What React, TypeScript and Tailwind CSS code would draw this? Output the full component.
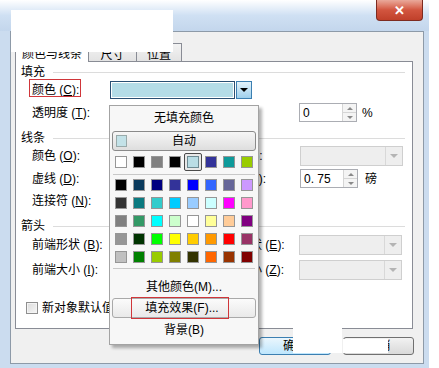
import React from "react"

const font = "font-['Liberation_Sans','Noto_Sans_CJK_SC',sans-serif]"

const gridRows = [
  ["#000000", "#0a3a5c", "#000080", "#333399", "#0000ff", "#3366ff", "#666699", "#cc99ff"],
  ["#333333", "#0b7a80", "#33cccc", "#00ccff", "#99ccff", "#ccffff", "#ff00ff", "#ff99cc"],
  ["#808080", "#339966", "#00ffff", "#ccffcc", "#ffffff", "#ffff99", "#ffcc99", "#800080"],
  ["#969696", "#003300", "#00ff00", "#ffff00", "#ffcc00", "#ff9900", "#ff0000", "#993366"],
  ["#c0c0c0", "#008000", "#99cc00", "#808000", "#333300", "#ff6600", "#993300", "#800000"],
]

const standardRow = ["#ffffff", "#000000", "#808080", "#000000", "#b9dde5", "#333399", "#0e9a9a", "#99cc00"]

function Key({ k }: { k: string }) {
  return (
    <>
      {" ("}
      <span className="underline">{k}</span>
      {"):"}
    </>
  )
}

function Spin({ value, width }: { value: string; width: string }) {
  return (
    <div className={`flex h-[19px] border border-[#abadb3] bg-white ${width}`}>
      <div className="flex flex-1 items-center pl-[3px] text-[12px] leading-none">{value}</div>
      <div className="flex w-[14px] flex-col border-l border-[#d5d5d5] bg-[#f4f4f4]">
        <div className="flex flex-1 items-center justify-center border-b border-[#d5d5d5]">
          <div className="h-0 w-0 border-x-[3px] border-b-[3px] border-x-transparent border-b-[#8a8a8a]" />
        </div>
        <div className="flex flex-1 items-center justify-center">
          <div className="h-0 w-0 border-x-[3px] border-t-[3px] border-x-transparent border-t-[#8a8a8a]" />
        </div>
      </div>
    </div>
  )
}

function DisabledCombo() {
  return (
    <div className="flex h-[20px] w-[103px] border border-[#cfcfcf] bg-[#eeeeee]">
      <div className="flex-1" />
      <div className="flex w-[17px] items-center justify-center border-l border-[#d8d8d8]">
        <div className="h-0 w-0 border-x-[4px] border-t-[4px] border-x-transparent border-t-[#b4b4b4]" />
      </div>
    </div>
  )
}

function Header({ text, cls }: { text: string; cls: string }) {
  return (
    <div className={`flex items-center pl-[5px] ${cls}`}>
      <span>{text}</span>
      <div className="ml-[8px] mr-[7px] h-px flex-1 bg-[#dcdcdc]" />
    </div>
  )
}

function Swatch({ c }: { c: string }) {
  return <div className="h-[12px] w-[12px] border border-[#969696]" style={{ backgroundColor: c }} />
}

function Popup() {
  return (
    <div className="absolute left-[109px] top-[105px] z-20 flex h-[240px] w-[150px] flex-col border border-[#a3a3a3] bg-[#f7f7f7] text-[12px] shadow-[3px_3px_3px_rgba(0,0,0,0.3)]">
      <div className="flex h-[24px] items-center justify-center">无填充颜色</div>
      <div className="mx-[2px] mt-[1px] flex h-[20px] items-center rounded-[3px] border border-[#8a8a8a] bg-gradient-to-b from-[#f6f6f6] to-[#dedede]">
        <div className="ml-[3px] h-[12px] w-[11px] border border-[#9aa] bg-[#c3e2e8]" />
        <div className="flex-1 pr-[14px] text-center">自动</div>
      </div>
      <div className="mt-[2px] flex h-[18px] items-center gap-[6px] pl-[5px]">
        {standardRow.map((c, i) =>
          i === 4 ? (
            <div key={i} className="relative h-[12px] w-[12px]">
              <div className="absolute -inset-[3px] rounded-[2px] border border-[#4a4a4a] bg-[#e8e8e8]" />
              <div className="relative h-[12px] w-[12px] border border-[#6d8a92]" style={{ backgroundColor: c }} />
            </div>
          ) : (
            <Swatch key={i} c={c} />
          )
        )}
      </div>
      <div className="mx-[3px] mt-[3px] h-px bg-[#c8c8c8]" />
      <div className="mt-[4px] flex flex-col gap-[6px] pl-[5px]">
        {gridRows.map((row, r) => (
          <div key={r} className="flex gap-[6px]">
            {row.map((c, i) => (
              <Swatch key={i} c={c} />
            ))}
          </div>
        ))}
      </div>
      <div className="mx-[3px] mt-[5px] h-px bg-[#c8c8c8]" />
      <div className="mt-[8px] flex h-[20px] items-center justify-center">其他颜色(M)...</div>
      <div className="relative mx-[2px] mt-[1px] flex h-[20px] items-center justify-center rounded-[3px] border border-[#a9a9a9] bg-gradient-to-b from-[#fbfbfb] to-[#e9e9e9]">
        <span className="pr-[4px]">填充效果(F)...</span>
        <div className="absolute left-[18px] top-[-2px] h-[22px] w-[98px] border border-[#d0363a]" />
      </div>
      <div className="mt-[2px] flex h-[20px] items-center justify-center">背景(B)</div>
    </div>
  )
}

export default function App() {
  return (
    <div className={`relative h-[368px] w-[439px] overflow-hidden bg-white text-[12px] text-black ${font}`}>
      {/* window frame */}
      <div className="flex h-[368px] w-[429px] flex-col bg-[#cbdcef]">
        {/* title bar */}
        <div className="flex h-[31px] justify-end bg-gradient-to-b from-[#ffffff] via-[#cfe0f3] to-[#c3d6ec] pr-[6px]">
          <div className="flex h-[21px] w-[47px] items-center justify-center rounded-b-[4px] border border-t-0 border-[#7d2b20] bg-gradient-to-b from-[#e9a99b] via-[#d2553f] to-[#c0402a]">
            <span className="text-[13px] font-bold leading-none text-white">✕</span>
          </div>
        </div>

        {/* client area */}
        <div className="ml-[10px] flex h-[333px] w-[414px] flex-col border border-[#8d9aa8] bg-[#f0f0f0]">
          {/* tabs */}
          <div className="mt-[7px] flex h-[23px] items-end pl-[4px]">
            <div className="relative z-10 flex h-[23px] w-[74px] items-center justify-center border border-b-0 border-[#898c95] bg-white pt-[6px]">
              颜色与线条
            </div>
            <div className="flex h-[19px] w-[48px] items-center justify-center border border-l-0 border-b-0 border-[#898c95] bg-gradient-to-b from-[#f3f3f3] to-[#e2e2e2] pt-[3px]">
              尺寸
            </div>
            <div className="flex h-[19px] w-[45px] items-center justify-center border border-l-0 border-b-0 border-[#898c95] bg-gradient-to-b from-[#f3f3f3] to-[#e2e2e2] pt-[3px]">
              位置
            </div>
          </div>

          {/* tab page */}
          <div className="ml-[4px] -mt-[1px] flex h-[268px] w-[398px] flex-col border border-[#898c95] bg-white">
            <Header text="填充" cls="mt-[1px] h-[18px]" />

            <div className="flex h-[18px] items-center">
              <div className="relative w-[94px] pl-[16px]">
                颜色<Key k="C" />
                <div className="absolute left-[13px] top-[-2px] h-[18px] w-[52px] border border-[#d0363a]" />
              </div>
              <div className="flex h-[18px] w-[142px]">
                <div className="flex-1 border border-[#2a4f74] bg-[#b4dce7] shadow-[inset_0_0_0_1px_#ffffff]" />
                <div className="ml-px flex w-[16px] items-center justify-center border border-[#3c7fb1] bg-gradient-to-b from-[#e4f3fb] to-[#9fd0ec]">
                  <div className="h-0 w-0 border-x-[4px] border-t-[4px] border-x-transparent border-t-black" />
                </div>
              </div>
            </div>

            <div className="mt-[4px] flex h-[19px] items-center">
              <div className="w-[283px] pl-[16px]">
                透明度<Key k="T" />
              </div>
              <Spin value="0" width="w-[58px]" />
              <span className="ml-[5px]">%</span>
            </div>

            <Header text="线条" cls="mt-[7px] h-[18px]" />

            <div className="mt-[-1px] flex h-[20px] items-center">
              <div className="w-[94px] pl-[16px]">
                颜色<Key k="O" />
              </div>
              <div className="w-[106px]" />
              <div className="w-[84px]">
                线型<Key k="S" />
              </div>
              <DisabledCombo />
            </div>

            <div className="mt-[3px] flex h-[19px] items-center">
              <div className="w-[94px] pl-[16px]">
                虚线<Key k="D" />
              </div>
              <div className="w-[106px]" />
              <div className="w-[84px]">
                粗细<Key k="W" />
              </div>
              <Spin value="0. 75" width="w-[58px]" />
              <span className="ml-[7px]">磅</span>
            </div>

            <div className="mt-[3px] flex h-[19px] items-center">
              <div className="w-[94px] pl-[16px]">
                连接符<Key k="N" />
              </div>
            </div>

            <Header text="箭头" cls="mt-[8px] h-[16px]" />

            <div className="mt-[1px] flex h-[20px] items-center">
              <div className="w-[94px] pl-[16px]">
                前端形状<Key k="B" />
              </div>
              <div className="w-[104px]" />
              <div className="w-[85px]">
                后端形状<Key k="E" />
              </div>
              <DisabledCombo />
            </div>

            <div className="mt-[5px] flex h-[20px] items-center">
              <div className="w-[94px] pl-[16px]">
                前端大小<Key k="I" />
              </div>
              <div className="w-[104px]" />
              <div className="w-[85px]">
                后端大小<Key k="Z" />
              </div>
              <DisabledCombo />
            </div>

            <div className="mt-[19px] flex h-[18px] items-center pl-[10px]">
              <div className="h-[12px] w-[12px] border border-[#8f8f8f] bg-gradient-to-br from-[#dcdcdc] to-[#f6f6f6] shadow-[inset_0_0_0_1px_#f4f4f4]" />
              <span className="ml-[4px]">新对象默认值</span>
            </div>
          </div>

          {/* buttons */}
          <div className="mt-[8px] flex justify-end gap-[12px] pr-[9px]">
            <div className="flex h-[18px] w-[72px] items-center justify-center rounded-[3px] border border-[#3c7fb1] bg-gradient-to-b from-[#eaf6fd] to-[#bee6fd]">
              确定
            </div>
            <div className="flex h-[18px] w-[71px] items-center justify-center rounded-[3px] border border-[#707070] bg-gradient-to-b from-[#f2f2f2] to-[#d9d9d9]">
              取消
            </div>
          </div>
        </div>
      </div>

      {/* redaction boxes */}
      <div className="absolute left-[11px] top-[10px] z-20 h-[42px] w-[162px] bg-white" />
      <div className="absolute left-[293px] top-[290px] z-20 h-[63px] w-[49px] bg-white" />
      <div className="absolute left-[343px] top-[339px] z-20 h-[14px] w-[45px] bg-white" />

      <Popup />
    </div>
  )
}
